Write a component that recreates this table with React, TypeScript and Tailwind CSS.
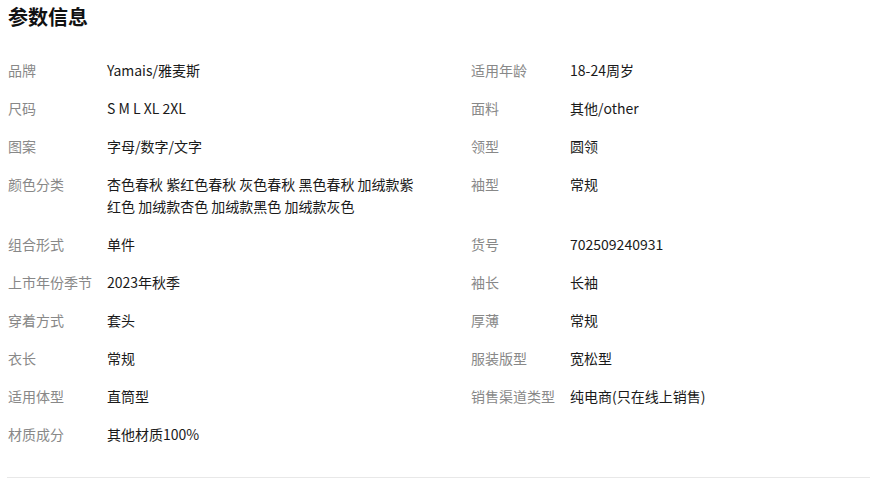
import React from "react";

const rows: [string, string][] = [
  ["品牌", "Yamais/雅麦斯"],
  ["适用年龄", "18-24周岁"],
  ["尺码", "S M L XL 2XL"],
  ["面料", "其他/other"],
  ["图案", "字母/数字/文字"],
  ["领型", "圆领"],
  ["颜色分类", "杏色春秋 紫红色春秋 灰色春秋 黑色春秋 加绒款紫红色 加绒款杏色 加绒款黑色 加绒款灰色"],
  ["袖型", "常规"],
  ["组合形式", "单件"],
  ["货号", "702509240931"],
  ["上市年份季节", "2023年秋季"],
  ["袖长", "长袖"],
  ["穿着方式", "套头"],
  ["厚薄", "常规"],
  ["衣长", "常规"],
  ["服装版型", "宽松型"],
  ["适用体型", "直筒型"],
  ["销售渠道类型", "纯电商(只在线上销售)"],
  ["材质成分", "其他材质100%"],
];

export default function App() {
  return (
    <div
      className="w-[878px] h-[481px] bg-white px-2 overflow-hidden"
      style={{ fontFamily: '"Noto Sans CJK SC", "Noto Sans", sans-serif' }}
    >
      <h2 className="text-[20px] leading-[34px] font-bold text-[#111]">参数信息</h2>
      <div className="mt-[17px] grid grid-cols-[463px_1fr]">
        {rows.map(([k, v], i) => (
          <div key={i} className="flex py-2 text-[14px] leading-[22px]">
            <div className="w-[99px] shrink-0 text-[#888]">{k}</div>
            <div className={i % 2 === 0 ? "w-[316px] text-[#1a1a1a]" : "flex-1 text-[#1a1a1a]"}>{v}</div>
          </div>
        ))}
      </div>
      <div className="mt-6 -ml-px h-px bg-[#e8e8e8]" />
    </div>
  );
}
